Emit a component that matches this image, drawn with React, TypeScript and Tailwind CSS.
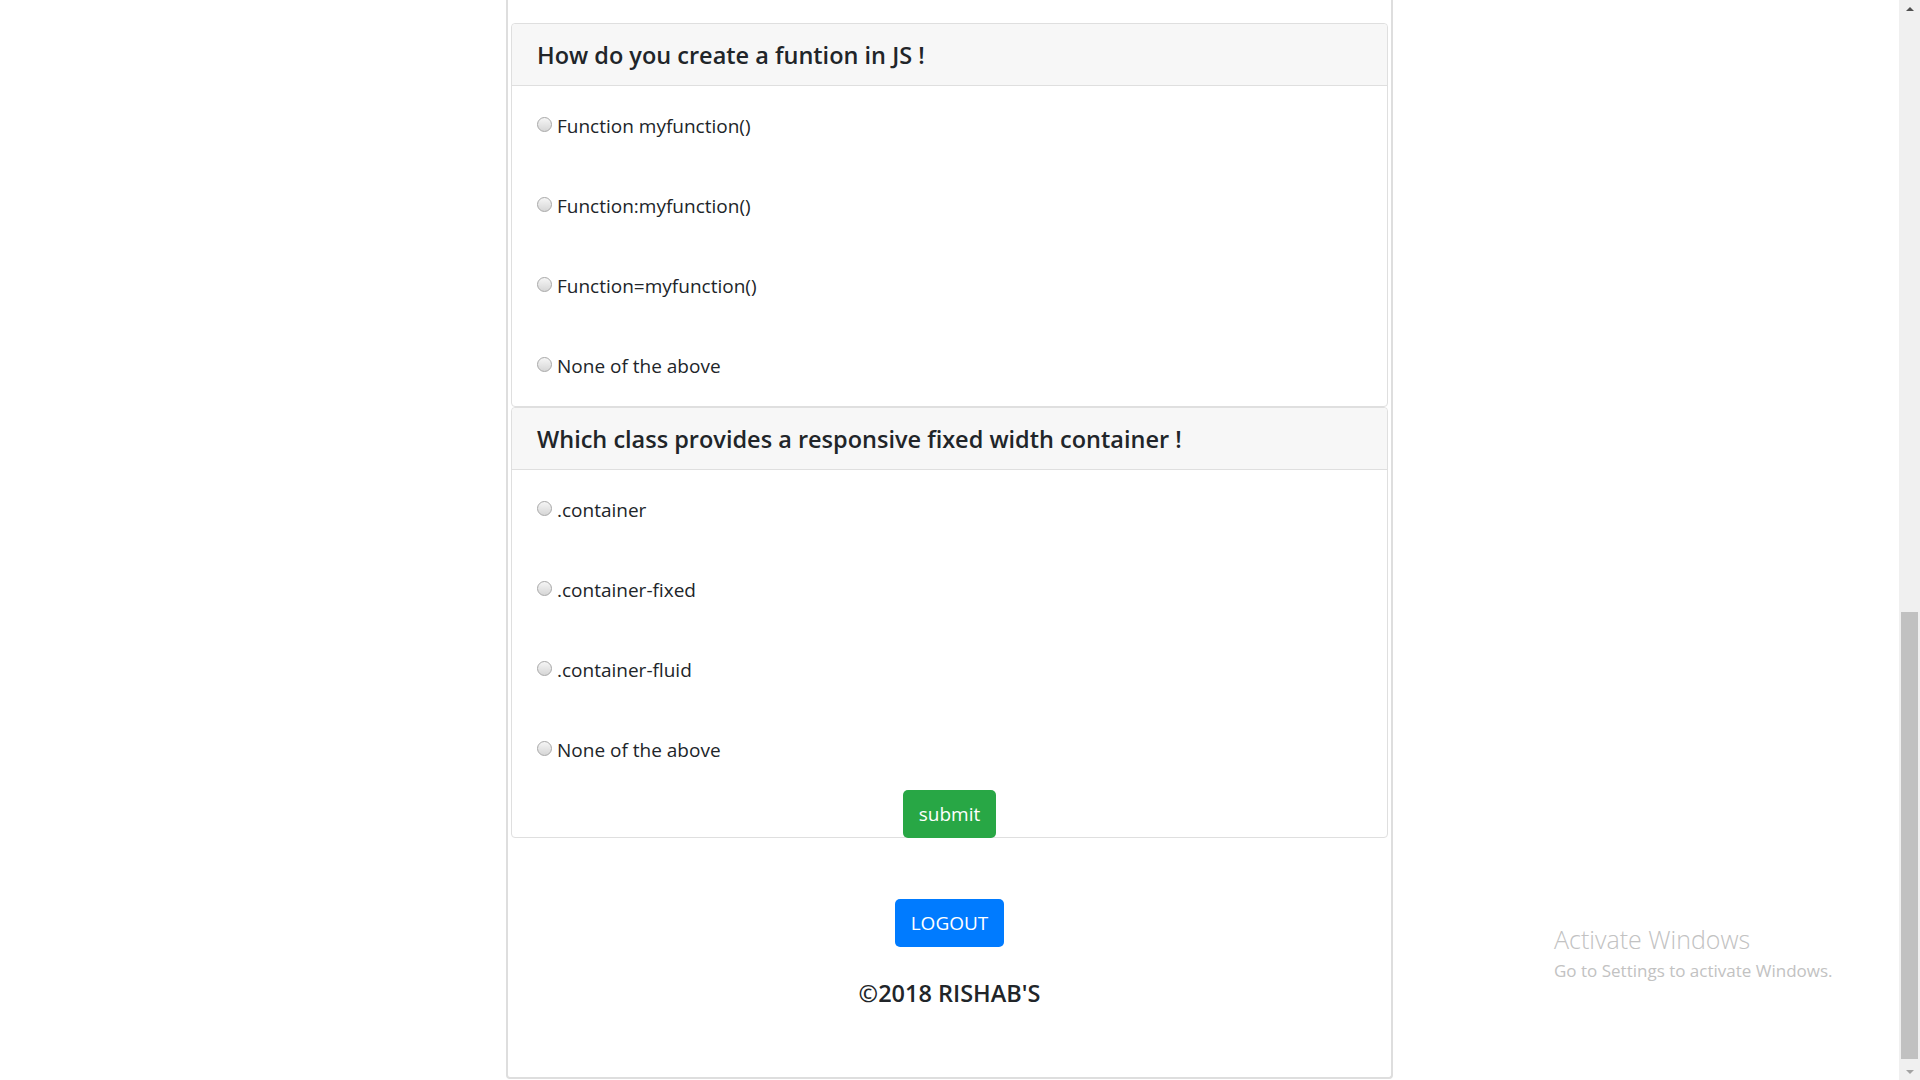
const font = { fontFamily: '"Open Sans", "Noto Sans", sans-serif' };

type Question = {
  title: string;
  options: string[];
};

const questions: Question[] = [
  {
    title: "How do you create a funtion in JS !",
    options: ["Function myfunction()", "Function:myfunction()", "Function=myfunction()", "None of the above"],
  },
  {
    title: "Which class provides a responsive fixed width container !",
    options: [".container", ".container-fixed", ".container-fluid", "None of the above"],
  },
];

function Radio({ name }: { name: string }) {
  return (
    <input
      type="radio"
      name={name}
      className="m-0 h-[15px] w-[15px] shrink-0 -translate-y-[2px] appearance-none rounded-full border border-[#a8a8a8] bg-linear-to-b from-[#f6f6f6] to-[#d6d6d6]"
    />
  );
}

function QuestionCard({ q, index, last }: { q: Question; index: number; last?: boolean }) {
  return (
    <div className="rounded-[4px] border border-[#dfdfdf] bg-white">
      <div className="flex h-[62px] items-center rounded-t-[4px] border-b border-[#dfdfdf] bg-[#f7f7f7] px-[25px]">
        <h4 className="pt-[2px] text-[23.5px] font-semibold leading-[1.2] text-[#212529]">{q.title}</h4>
      </div>
      <div className="flex flex-col">
        {q.options.map((opt) => (
          <label key={opt} className="flex h-[80px] items-center gap-[5px] pl-[25px] text-[19px] text-[#212529]">
            <Radio name={`q${index}`} />
            <span>{opt}</span>
          </label>
        ))}
        {last ? (
          <div className="-mb-px flex justify-center">
            <button className="h-[48px] rounded-[5px] bg-[#28a745] px-4 text-[19px] text-white">submit</button>
          </div>
        ) : null}
      </div>
    </div>
  );
}

function Scrollbar() {
  return (
    <div className="flex h-full w-[21px] shrink-0 flex-col bg-[#f0f0f0]">
      <div className="flex h-[17px] items-center justify-center">
        <div className="h-0 w-0 border-x-[4px] border-b-[4px] border-x-transparent border-b-[#505050]" />
      </div>
      <div className="flex flex-1 flex-col px-[2px]">
        <div className="h-[595px]" />
        <div className="h-[447px] bg-[#c1c1c1]" />
      </div>
      <div className="flex h-[17px] items-center justify-center">
        <div className="h-0 w-0 border-x-[4px] border-t-[4px] border-x-transparent border-t-[#a3a3a3]" />
      </div>
    </div>
  );
}

export default function App() {
  return (
    <div className="flex h-[1080px] w-full overflow-hidden bg-white" style={font}>
      <main className="relative flex-1">
        <div className="mx-auto w-[887px] rounded-b-[4px] border-x-2 border-b-2 border-[#dedede] px-[3px] pb-[70px] pt-[23px]">
          {questions.map((q, i) => (
            <QuestionCard key={q.title} q={q} index={i} last={i === questions.length - 1} />
          ))}
          <div className="mt-[61px] flex flex-col items-center">
            <button className="h-[48px] rounded-[5px] bg-[#007bff] px-4 text-[19px] text-white">LOGOUT</button>
            <h4 className="mt-[32px] text-[23.5px] font-semibold leading-[1.2] text-[#212529]">©2018 RISHAB'S</h4>
          </div>
        </div>
        <div className="absolute left-[1554px] top-[927px] text-[#c2c2c2]">
          <p className="text-[25px] font-light leading-none">Activate Windows</p>
          <p className="mt-[10px] text-[17px] leading-none">Go to Settings to activate Windows.</p>
        </div>
      </main>
      <Scrollbar />
    </div>
  );
}
